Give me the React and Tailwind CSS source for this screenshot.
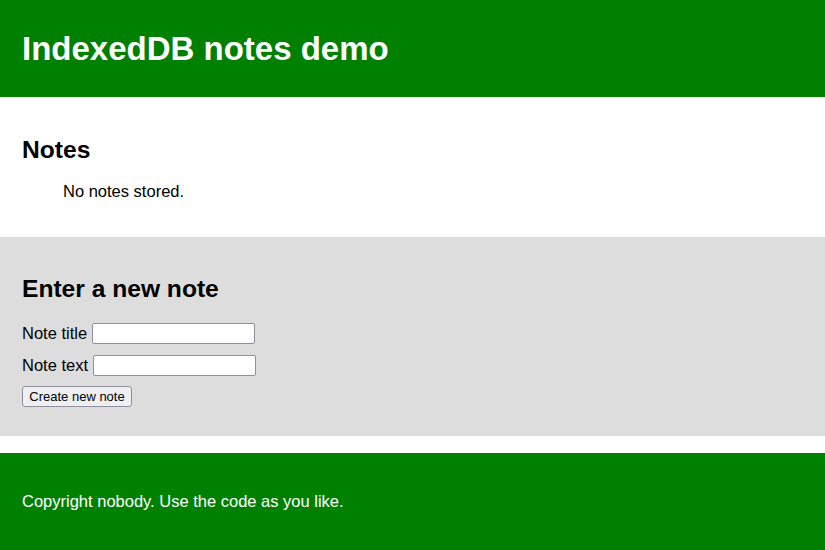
export default function App() {
  return (
    <div className="min-h-[550px] bg-white font-['Liberation_Sans',Arial,sans-serif] text-black">
      <header className="h-[97px] bg-[#008000] px-[22px] flex items-center">
        <h1 className="text-[33px] leading-[38px] font-bold text-white">IndexedDB notes demo</h1>
      </header>

      <section className="h-[140px] px-[22px] pt-[39px]">
        <h2 className="text-[24.6px] leading-[28px] font-bold">Notes</h2>
        <ul className="mt-[18px] pl-[41px]">
          <li className="text-[16.5px] leading-[19px]">No notes stored.</li>
        </ul>
      </section>

      <section className="h-[199px] bg-[#dddddd] px-[22px] pt-[38px]">
        <h2 className="text-[24.6px] leading-[28px] font-bold">Enter a new note</h2>
        <form className="mt-[20px] flex flex-col items-start" onSubmit={(e) => e.preventDefault()}>
          <label className="flex items-center gap-[5px] text-[16.5px] leading-[21px]">
            Note title
            <input type="text" className="w-[163px] h-[21px] bg-white border border-[#8f8f9d] rounded-[2px]" />
          </label>
          <label className="mt-[11px] flex items-center gap-[5px] text-[16.5px] leading-[21px]">
            Note text
            <input type="text" className="w-[163px] h-[21px] bg-white border border-[#8f8f9d] rounded-[2px]" />
          </label>
          <button type="submit" className="mt-[10px] h-[21px] w-[110px] bg-[#efeff3] border border-[#8f8f9d] rounded-[3px] text-[13px] leading-[19px]">
            Create new note
          </button>
        </form>
      </section>

      <div className="h-[17px]" />

      <footer className="h-[97px] bg-[#008000] px-[22px] flex items-center">
        <p className="text-[16.5px] leading-[19px] text-white">Copyright nobody. Use the code as you like.</p>
      </footer>
    </div>
  );
}
